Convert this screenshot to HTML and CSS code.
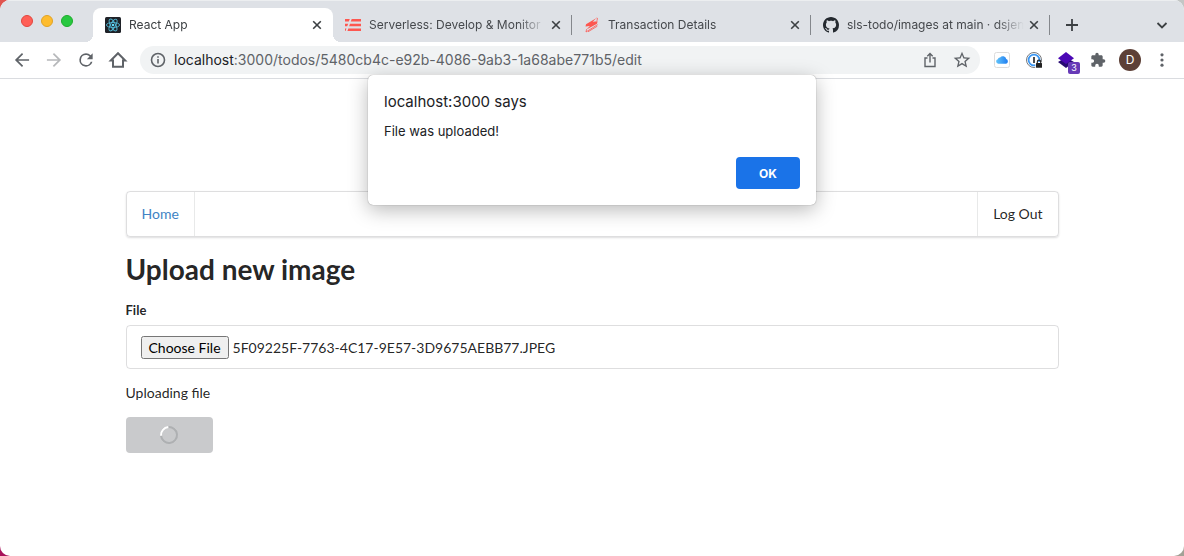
FILE: index.html
```html
<!DOCTYPE html>
<html lang="en">
<head>
<meta charset="utf-8">
<meta name="viewport" content="width=device-width, initial-scale=1">
<title>React App</title>
<link rel="stylesheet" href="styles.css">
</head>
<body>
<div class="window">
  <header class="tab-strip">
    <div class="lights">
      <button class="light light-close" aria-label="Close window"></button>
      <button class="light light-min" aria-label="Minimize window"></button>
      <button class="light light-max" aria-label="Zoom window"></button>
    </div>
    <div class="tabs">
      <div class="tab tab-active">
        <svg class="favicon" viewBox="0 0 16 16" aria-hidden="true"><rect width="16" height="16" rx="1.5" fill="#1f2228"/><g fill="none" stroke="#53b9d6" stroke-width=".9"><ellipse cx="8" cy="8" rx="6.6" ry="2.5"/><ellipse cx="8" cy="8" rx="6.6" ry="2.5" transform="rotate(60 8 8)"/><ellipse cx="8" cy="8" rx="6.6" ry="2.5" transform="rotate(120 8 8)"/></g><circle cx="8" cy="8" r="1.3" fill="#61dafb"/></svg>
        <span class="tab-title">React App</span>
        <button class="tab-close" aria-label="Close tab"><svg viewBox="0 0 16 16"><path d="M4.2 4.2l7.6 7.6M11.8 4.2l-7.6 7.6"/></svg></button>
      </div>
      <div class="tab">
        <svg class="favicon" viewBox="0 0 16 16" aria-hidden="true"><g fill="#fd5750"><path d="M0 2h4.800l-1 2.400H0zM6.700 2H16v2.400H5.800zM0 6.800h3.200l-1 2.400H0zM5 6.800H16v2.400H4.100zM0 11.600h1.500l-1 2.400H0zM3.300 11.600H16V14H2.400z"/></g></svg>
        <span class="tab-title">Serverless: Develop &amp; Monitor</span>
        <button class="tab-close" aria-label="Close tab"><svg viewBox="0 0 16 16"><path d="M4.200 4.200l7.600 7.600M11.800 4.200l-7.600 7.600"/></svg></button>
      </div>
      <div class="tab">
        <svg class="favicon" viewBox="0 0 16 16" aria-hidden="true"><path d="M12.500 1L2 7.200l-.5 2.300 4.400-.4-3.400 3.500L13 6.800l.6-2.600-4.900.6z" fill="#fd5750"/><path d="M13.600 7.600L2 15l.6-2.800M13.300 9.200L4 14.800M12.500 1l1 .3-.6 2.600" fill="none" stroke="#fd5750" stroke-width=".8"/></svg>
        <span class="tab-title">Transaction Details</span>
        <button class="tab-close" aria-label="Close tab"><svg viewBox="0 0 16 16"><path d="M4.200 4.200l7.600 7.600M11.800 4.200l-7.600 7.600"/></svg></button>
      </div>
      <div class="tab">
        <svg class="favicon" viewBox="0 0 16 16" aria-hidden="true"><path fill="#24292f" d="M8 0C3.580 0 0 3.580 0 8c0 3.540 2.290 6.530 5.470 7.590.4.070.55-.17.55-.38 0-.19-.01-.82-.01-1.490-2.010.37-2.530-.49-2.690-.94-.09-.23-.48-.94-.82-1.130-.28-.15-.68-.52-.01-.53.63-.01 1.080.58 1.230.82.72 1.210 1.870.87 2.330.66.07-.52.28-.87.51-1.070-1.780-.2-3.640-.89-3.640-3.950 0-.87.31-1.590.82-2.150-.08-.2-.36-1.020.08-2.120 0 0 .67-.21 2.200.82.64-.18 1.320-.27 2-.27s1.360.09 2 .27c1.530-1.040 2.200-.82 2.200-.82.44 1.100.16 1.920.08 2.120.51.56.82 1.270.82 2.150 0 3.070-1.870 3.750-3.650 3.950.29.25.54.73.54 1.480 0 1.070-.01 1.930-.01 2.200 0 .21.15.46.55.38A8.010 8.010 0 0016 8c0-4.420-3.580-8-8-8z"/></svg>
        <span class="tab-title">sls-todo/images at main · dsjen</span>
        <button class="tab-close" aria-label="Close tab"><svg viewBox="0 0 16 16"><path d="M4.200 4.200l7.600 7.600M11.800 4.200l-7.600 7.600"/></svg></button>
      </div>
    </div>
    <button class="strip-button" aria-label="New tab"><svg viewBox="0 0 16 16"><path d="M8 2v12M2 8h12"/></svg></button>
    <button class="strip-button strip-search" aria-label="Search tabs"><svg viewBox="0 0 16 16"><path d="M3.500 6l4.500 4.500L12.500 6"/></svg></button>
  </header>

  <nav class="toolbar" aria-label="Browser">
    <button class="tool" aria-label="Back"><svg class="icon-fill" viewBox="0 0 24 24"><path d="M20.500 11H7.400l6-6L12 3.500 3.500 12l8.500 8.500 1.400-1.500-6-6h13.100z"/></svg></button>
    <button class="tool tool-off" aria-label="Forward"><svg class="icon-fill" viewBox="0 0 24 24"><path d="M3.500 11h13.100l-6-6L12 3.500l8.500 8.500-8.500 8.500-1.400-1.500 6-6H3.500z"/></svg></button>
    <button class="tool" aria-label="Reload"><svg class="icon-fill" viewBox="0 0 24 24"><path d="M17.650 6.350A7.960 7.960 0 0012 4a8 8 0 107.730 10h-2.080A6 6 0 1112 6c1.660 0 3.140.69 4.220 1.780L13 11h7V4z"/></svg></button>
    <button class="tool" aria-label="Home"><svg class="icon-line" viewBox="0 0 20 20"><path d="M2.800 10.500L10 3.200l7.200 7.300H15v6.300H5v-6.300z"/></svg></button>
    <form class="omnibox">
      <button type="button" class="tool" aria-label="Site information"><svg class="icon-line icon-info" viewBox="0 0 20 20"><circle cx="10" cy="10" r="6.500"/><path d="M10 9v4.500M10 6.200v1.600"/></svg></button>
      <a class="url" href="#edit"><span class="url-host">localhost</span>:3000/todos/5480cb4c-e92b-4086-9ab3-1a68abe771b5/edit</a>
      <button type="button" class="tool" aria-label="Share"><svg class="icon-line icon-thin" viewBox="0 0 20 20"><path d="M7.500 8H5v8.500h10V8h-2.500M10 12.500V3.800M7.300 6.300L10 3.600l2.700 2.700"/></svg></button>
      <button type="button" class="tool" aria-label="Bookmark"><svg class="icon-fill" viewBox="0 0 24 24"><path d="M22 9.240l-7.190-.62L12 2 9.190 8.630 2 9.240l5.460 4.730L5.820 21 12 17.270 18.180 21l-1.630-7.030L22 9.240zM12 15.400l-3.760 2.270 1-4.280-3.320-2.880 4.380-.38L12 6.100l1.710 4.040 4.380.38-3.320 2.880 1 4.280L12 15.400z"/></svg></button>
    </form>
    <button class="tool" aria-label="iCloud"><svg viewBox="0 0 20 20"><defs><linearGradient id="cloud" x1="0" x2="1"><stop offset="0" stop-color="#62c4fa"/><stop offset="1" stop-color="#1f7df0"/></linearGradient></defs><rect x="2.500" y="2.500" width="15" height="15" rx="2" fill="#fff" stroke="#dcdcdc"/><path d="M6.200 13.700a2.300 2.300 0 01-.4-4.500 2.200 2.200 0 012.300-1.600 3.400 3.400 0 016.100 1.500 2.400 2.400 0 01-.1 4.600z" fill="url(#cloud)"/></svg></button>
    <button class="tool" aria-label="1Password"><svg viewBox="0 0 20 20"><circle cx="10" cy="10" r="7.500" fill="#fff" stroke="#77797c"/><circle cx="10" cy="10" r="5.400" fill="#fff" stroke="#3b98f5" stroke-width="1.800"/><path d="M10 7v6" stroke="#36393d" stroke-width="1.800"/><path d="M11.300 12h7v6.500h-7z" fill="#fff"/><rect x="12" y="13" width="6" height="4.800" rx=".6" fill="#222"/><path d="M13.300 13.500v-1.700a1.700 1.700 0 013.400 0v1.700" fill="none" stroke="#222" stroke-width="1.100"/></svg></button>
    <button class="tool tool-badged" aria-label="Extension, 3 notices"><svg viewBox="0 0 20 20"><path d="M2 12l8-4.500 8 4.500-8 6z" fill="#270a72"/><path d="M2 8.300L10 2l8 6.300-8 5.700z" fill="#4b08b5"/></svg><span class="badge">3</span></button>
    <button class="tool" aria-label="Extensions"><svg class="icon-fill icon-puzzle" viewBox="0 0 24 24"><path d="M20.500 11H19V7c0-1.100-.9-2-2-2h-4V3.500a2.500 2.500 0 00-5 0V5H4c-1.100 0-2 .9-2 2v3.800h1.500a2.700 2.700 0 010 5.400H2V20c0 1.100.9 2 2 2h3.800v-1.500a2.700 2.700 0 015.400 0V22H17c1.100 0 2-.9 2-2v-4h1.500a2.500 2.500 0 000-5z"/></svg></button>
    <button class="tool" aria-label="Profile"><span class="avatar">D</span></button>
    <button class="tool" aria-label="Menu"><svg class="icon-fill" viewBox="0 0 20 20"><circle cx="10" cy="4.800" r="1.600"/><circle cx="10" cy="10" r="1.600"/><circle cx="10" cy="15.200" r="1.600"/></svg></button>
  </nav>

  <main class="page">
    <nav class="menu" aria-label="Main">
      <a class="menu-item menu-home" href="#home">Home</a>
      <a class="menu-item menu-logout" href="#logout">Log Out</a>
    </nav>
    <h1 class="title">Upload new image</h1>
    <form class="form">
      <label class="label" for="file">File</label>
      <input class="file" id="file" type="file" accept="image/*">
      <p class="status">Uploading file</p>
      <button class="submit" type="button" aria-label="Upload, in progress"><span class="spinner"></span></button>
    </form>
  </main>

  <div class="dialog" role="alertdialog" aria-labelledby="dialog-title">
    <h2 class="dialog-title" id="dialog-title">localhost:3000 says</h2>
    <p class="dialog-text">File was uploaded!</p>
    <button class="dialog-ok">OK</button>
  </div>
</div>
<script src="upload.js"></script>
</body>
</html>
```

FILE: upload.js
```js
const chosen = new DataTransfer();
chosen.items.add(new File([''], '5F09225F-7763-4C17-9E57-3D9675AEBB77.JPEG', { type: 'image/jpeg' }));
document.getElementById('file').files = chosen.files;
```

FILE: styles.css
```css
* { box-sizing: border-box; }

body {
  margin: 0;
  background: linear-gradient(90deg, #e0544f 50%, #c3c6c5 50%) top / 100% 50% no-repeat,
    linear-gradient(90deg, #a8125a 50%, #a3a196 50%);
  font-family: Inter, "Liberation Sans", sans-serif;
  color: #202124;
}

button { margin: 0; padding: 0; border: 0; background: none; font: inherit; color: inherit; }
a { color: inherit; text-decoration: none; }

.window {
  position: relative;
  display: flex;
  flex-direction: column;
  min-height: 100vh;
  overflow: hidden;
  border-radius: 10px;
  background: #fff;
}

/* Tab strip */
.tab-strip {
  display: flex;
  align-items: center;
  height: 42px;
  padding: 0 8px 0 21px;
  background: #dee1e6;
  box-shadow: inset 0 1px #eceef0;
}
.lights { display: flex; gap: 8px; margin-right: 20px; }
.light { width: 12px; height: 12px; border-radius: 50%; border: 1px solid; }
.light-close { background: #ff5f57; border-color: #e2463f; }
.light-min { background: #febc2e; border-color: #e1a325; }
.light-max { background: #28c840; border-color: #1dad2b; }

.tabs { display: flex; align-self: flex-end; flex: 0 1 957px; min-width: 0; }
.tab {
  display: flex;
  align-items: center;
  gap: 8px;
  flex: 0 1 239px;
  min-width: 0;
  height: 34px;
  padding: 0 8px 0 12px;
  font-size: 12px;
  line-height: 16px;
  color: #45484c;
  background: linear-gradient(#84878c, #84878c) right center / 1px 20px no-repeat;
}
.tab-active {
  position: relative;
  flex-basis: 240px;
  border-radius: 8px 8px 0 0;
  background: #fff;
  color: #3c4043;
}
.tab-active::before, .tab-active::after {
  content: "";
  position: absolute;
  bottom: 0;
  width: 8px;
  height: 8px;
}
.tab-active::before { right: 100%; background: radial-gradient(circle at 0 0, transparent 8px, #fff 8px); }
.tab-active::after { left: 100%; background: radial-gradient(circle at 100% 0, transparent 8px, #fff 8px); }
.favicon { flex: none; width: 16px; height: 16px; }
.tab-title {
  flex: 1;
  min-width: 0;
  overflow: hidden;
  white-space: nowrap;
  -webkit-mask-image: linear-gradient(90deg, #000 calc(100% - 28px), transparent);
  mask-image: linear-gradient(90deg, #000 calc(100% - 28px), transparent);
}
.tab-close { flex: none; width: 16px; height: 16px; margin-left: -6px; }
.tab-close svg { display: block; fill: none; stroke: #3c4043; stroke-width: 1.6; }
.strip-button { flex: none; width: 28px; height: 28px; margin: 8px 0 0 8px; display: grid; place-items: center; }
.strip-button svg { width: 16px; height: 16px; fill: none; stroke: #3c4043; stroke-width: 1.8; }
.strip-search { margin-left: auto; }

/* Toolbar */
.toolbar {
  display: flex;
  align-items: center;
  height: 37px;
  padding: 0 6px;
  border-bottom: 1px solid #dadce0;
}
.tool { flex: none; display: grid; place-items: center; width: 32px; height: 28px; }
.tool svg { width: 20px; height: 20px; }
.icon-fill { fill: #5f6368; }
.icon-line { fill: none; stroke: #5f6368; stroke-width: 2; }
.icon-info { stroke-width: 1.6; }
.icon-thin { stroke-width: 1.4; }
.tool .icon-puzzle { width: 16px; height: 16px; }
.tool-off { opacity: .45; }
.omnibox {
  display: flex;
  align-items: center;
  flex: 1;
  min-width: 0;
  height: 28px;
  margin: 0 6px;
  padding: 0 2px;
  border-radius: 14px;
  background: #f1f3f4;
}
.url { flex: 1; min-width: 0; overflow: hidden; white-space: nowrap; font-size: 14px; line-height: 20px; color: #5f6368; }
.url-host { color: #202124; }
.tool-badged { position: relative; }
.badge {
  position: absolute;
  right: 2px;
  bottom: 0;
  width: 12px;
  height: 12px;
  border-radius: 2px;
  background: #673ab7;
  color: #fff;
  font-size: 9px;
  line-height: 12px;
  text-align: center;
}
.avatar { width: 22px; height: 22px; border-radius: 50%; background: #5d4037; color: #fff; font-size: 12px; line-height: 22px; }

/* Page */
.page {
  width: 100%;
  max-width: 933px;
  margin: 0 auto;
  padding-top: 112px;
  font-family: Lato, sans-serif;
  font-size: 14px;
  line-height: 20px;
  color: rgba(0, 0, 0, .87);
}
.menu {
  display: flex;
  justify-content: space-between;
  border: 1px solid rgba(34, 36, 38, .15);
  border-radius: 4px;
  box-shadow: 0 1px 2px rgba(34, 36, 38, .15);
}
.menu-item { padding: 12px 15px; border: 0 solid rgba(34, 36, 38, .1); }
.menu-home { border-right-width: 1px; color: #4183c4; }
.menu-logout { border-left-width: 1px; }
.title { margin: 14px 0 13px; font-size: 28px; line-height: 36px; }
.form { display: flex; flex-direction: column; align-items: flex-start; }
.label { margin-bottom: 5px; font-size: 13px; font-weight: 700; }
.file {
  width: 100%;
  height: 44px;
  padding: 10px 14px;
  border: 1px solid rgba(34, 36, 38, .15);
  border-radius: 4px;
  font: inherit;
  line-height: 22px;
  color: inherit;
}
.file::file-selector-button { font: inherit; line-height: 17px; }
.status { margin: 14px 0; }
.submit { display: grid; place-items: center; width: 87px; height: 36px; border-radius: 4px; background: #c9cacc; }
.spinner {
  width: 18px;
  height: 18px;
  border: 2px solid #aeb0b2;
  border-left-color: #fff;
  border-radius: 50%;
  transform: rotate(40deg);
}

/* Alert */
.dialog {
  position: absolute;
  top: 75px;
  left: 50%;
  display: flex;
  flex-direction: column;
  width: 448px;
  margin-left: -224px;
  padding: 16px;
  border-radius: 5px;
  background: #fff;
  box-shadow: 0 0 1px rgba(0, 0, 0, .5), 0 5px 20px rgba(0, 0, 0, .28);
}
.dialog-title { margin: 0 0 9px; font-size: 15px; font-weight: 400; line-height: 22px; }
.dialog-text { margin: 0 0 17px; font-size: 13px; line-height: 18px; }
.dialog-ok {
  align-self: flex-end;
  width: 64px;
  height: 32px;
  border-radius: 4px;
  background: #1a73e8;
  color: #fff;
  font-size: 12px;
  font-weight: 700;
}
```
